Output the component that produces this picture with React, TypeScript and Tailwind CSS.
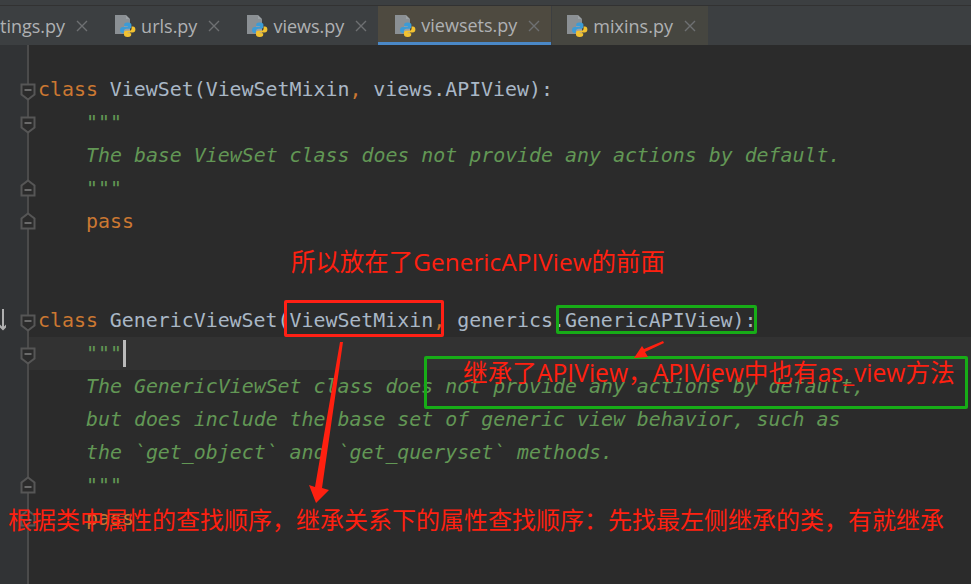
const Py = () => (
  <svg width="24" height="24" viewBox="0 0 24 24" className="shrink-0">
    <path d="M1 1H12L16 5V20H1Z" fill="#9aa0a4" />
    <path d="M1 1H12V5H16V12H10V20H1Z" fill="#8b9094" />
    <path d="M13.5 8.5c-2.6 0-3.3 1-3.3 2.2v1.6h3.6v.7H8.6c-1.5 0-2.6 1-2.6 3 0 2.1 1 3 2.4 3h1.4v-1.9c0-1.4 1.1-2.4 2.6-2.4h3c1.1 0 2-.8 2-2v-2c0-1.2-1.1-2.2-3.5-2.2z" fill="#3c9bd6" />
    <path d="M13.9 23c2.6 0 3.3-1 3.3-2.2v-1.6h-3.6v-.7h5.2c1.5 0 2.6-1 2.6-3 0-2.1-1-3-2.4-3h-1.4v1.9c0 1.4-1.1 2.4-2.6 2.4h-3c-1.1 0-2 .8-2 2v2c0 1.2 1.1 2.2 3.5 2.2z" fill="#f2c230" />
  </svg>
);

const Tab = ({ name, cls, active, cut }: { name: string; cls: string; active?: boolean; cut?: boolean }) => (
  <div className={`flex h-full items-center ${cls} ${active ? "border-b-[3px] border-[#4a88c7] pt-[3px]" : "pt-[1px]"}`}>
    {!cut && <Py />}
    <span className={`text-[18px] text-[#afb1b3] ${cut ? "" : "ml-[3px]"}`}>{name}</span>
    <svg width="12" height="12" viewBox="0 0 12 12" className="ml-[11px]">
      <path d="M1 1L11 11M11 1L1 11" stroke="#6e7072" strokeWidth="1.4" />
    </svg>
  </div>
);

type Seg = [string, string];
const O = "text-[#cc7832]";
const B = "text-[#a9b7c6]";
const G = "text-[#629755] italic";
type Line = { segs: Seg[]; indent?: boolean; current?: boolean; cursor?: boolean; fold?: "down" | "up"; arrow?: boolean };
const lines: Line[] = [
  { fold: "down", segs: [["class ", O], ["ViewSet(ViewSetMixin", B], [",", O], [" views.APIView):", B]] },
  { fold: "down", indent: true, segs: [['"""', G]] },
  { indent: true, segs: [["The base ViewSet class does not provide any actions by default.", G]] },
  { fold: "up", indent: true, segs: [['"""', G]] },
  { fold: "up", indent: true, segs: [["pass", O]] },
  { segs: [] },
  { segs: [] },
  { fold: "down", arrow: true, segs: [["class ", O], ["GenericViewSet(ViewSetMixin", B], [",", O], [" generics.GenericAPIView):", B]] },
  { fold: "down", indent: true, current: true, cursor: true, segs: [['"""', G]] },
  { indent: true, segs: [["The GenericViewSet class does not provide any actions by default,", G]] },
  { indent: true, segs: [["but does include the base set of generic view behavior, such as", G]] },
  { indent: true, segs: [["the `get_object` and `get_queryset` methods.", G]] },
  { fold: "up", indent: true, segs: [['"""', G]] },
  { fold: "up", indent: true, segs: [["pass", O]] },
];

const Fold = ({ up }: { up?: boolean }) => (
  <svg width="16" height="18" viewBox="0 0 16 18" className={`-mr-[9px] ml-auto shrink-0 ${up ? "mb-[2px]" : "mt-[4px]"}`}>
    <path
      d={up ? "M1.5 16.5V6.5L8 1.5L14.5 6.5V16.5Z" : "M1.5 1.5V11.5L8 16.5L14.5 11.5V1.5Z"}
      fill="#2b2b2b"
      stroke="#565656"
      strokeWidth="2"
    />
    <path d={up ? "M4.5 11H11.5" : "M4.5 7H11.5"} stroke="#6a6a6a" strokeWidth="2" />
  </svg>
);

const red = "absolute whitespace-nowrap font-['Open_Sans','Noto_Sans_CJK_SC',sans-serif] leading-[34px] text-[#ff2010]";

export default function App() {
  return (
    <div className="flex h-[584px] w-[971px] flex-col overflow-hidden bg-[#2b2b2b]">
      <div className="h-[6px] border-b border-[#323232] bg-[#3c3f41]" />
      <div className="flex h-[39px] bg-[#3c3f41] font-['Open_Sans',sans-serif]">
        <Tab name="tings.py" cls="pr-[10px]" cut />
        <Tab name="urls.py" cls="pl-[16px] pr-[10px]" />
        <Tab name="views.py" cls="pl-[16px] pr-[10px]" />
        <Tab name="viewsets.py" cls="ml-[1px] bg-[#4e4a40] pl-[16px] pr-[11px]" active />
        <Tab name="mixins.py" cls="ml-[1px] bg-[#464640] pl-[14px] pr-[12px]" />
      </div>
      <div className="relative flex flex-1">
        <div className="z-10 flex w-[29px] shrink-0 flex-col border-r-2 border-[#4b4b4b] bg-[#313335] pt-[28px]">
          {lines.map((l, i) => (
            <div key={i} className="flex h-[33px] items-center">
              {l.arrow && (
                <svg width="6" height="22" viewBox="0 0 6 22" className="mt-[-2px] shrink-0">
                  <path d="M3 0V20M-2 15L3 20L8 15" fill="none" stroke="#b0b0b0" strokeWidth="2" />
                </svg>
              )}
              {l.fold && <Fold up={l.fold === "up"} />}
            </div>
          ))}
        </div>
        <div className="flex-1 pt-[28px] font-['DejaVu_Sans_Mono',monospace] text-[19.9px]">
          {lines.map((l, i) => (
            <div
              key={i}
              className={`flex h-[33px] items-center whitespace-pre pl-[9px] ${l.current ? "bg-[#323232]" : ""}`}
            >
              <span className={l.indent ? "pl-[48px]" : ""}>
                {l.segs.map(([t, c], j) => (
                  <span key={j} className={c}>
                    {t}
                  </span>
                ))}
              </span>
              {l.cursor && <span className="ml-[1px] h-[27px] w-[3px] bg-[#bbbbbb]" />}
            </div>
          ))}
        </div>

        {/* annotations drawn over the editor */}
        <div className="absolute left-[284px] top-[255px] z-20 h-[37px] w-[160px] rounded-[2px] border-[3px] border-[#ff2015]" />
        <div className="absolute left-[556px] top-[260px] z-20 h-[29px] w-[201px] rounded-[2px] border-[3px] border-[#17ac17]" />
        <div className="absolute left-[424px] top-[311px] z-20 h-[53px] w-[544px] rounded-[2px] border-[3px] border-[#17ac17]" />

        <svg className="absolute left-0 top-0 z-20" width="971" height="539" viewBox="0 45 971 539">
          <path d="M340 342L343 342L322 488L329 490L316 503L309 485L315 487Z" fill="#ff2010" />
          <path d="M663 341L664 343L645 352L648 357L634 358L642 346L644 349Z" fill="#ff2010" />
        </svg>

        <span className={`${red} left-[291px] top-[200px] z-20 text-[24.45px]`}>所以放在了GenericAPIView的前面</span>
        <span className={`${red} left-[463px] top-[311px] z-20 text-[24.65px]`}>继承了APIView，APIView中也有as_view方法</span>
        <span className={`${red} left-[8px] top-[458px] z-20 text-[24px]`}>根据类中属性的查找顺序，继承关系下的属性查找顺序：先找最左侧继承的类，有就继承</span>
      </div>
    </div>
  );
}
